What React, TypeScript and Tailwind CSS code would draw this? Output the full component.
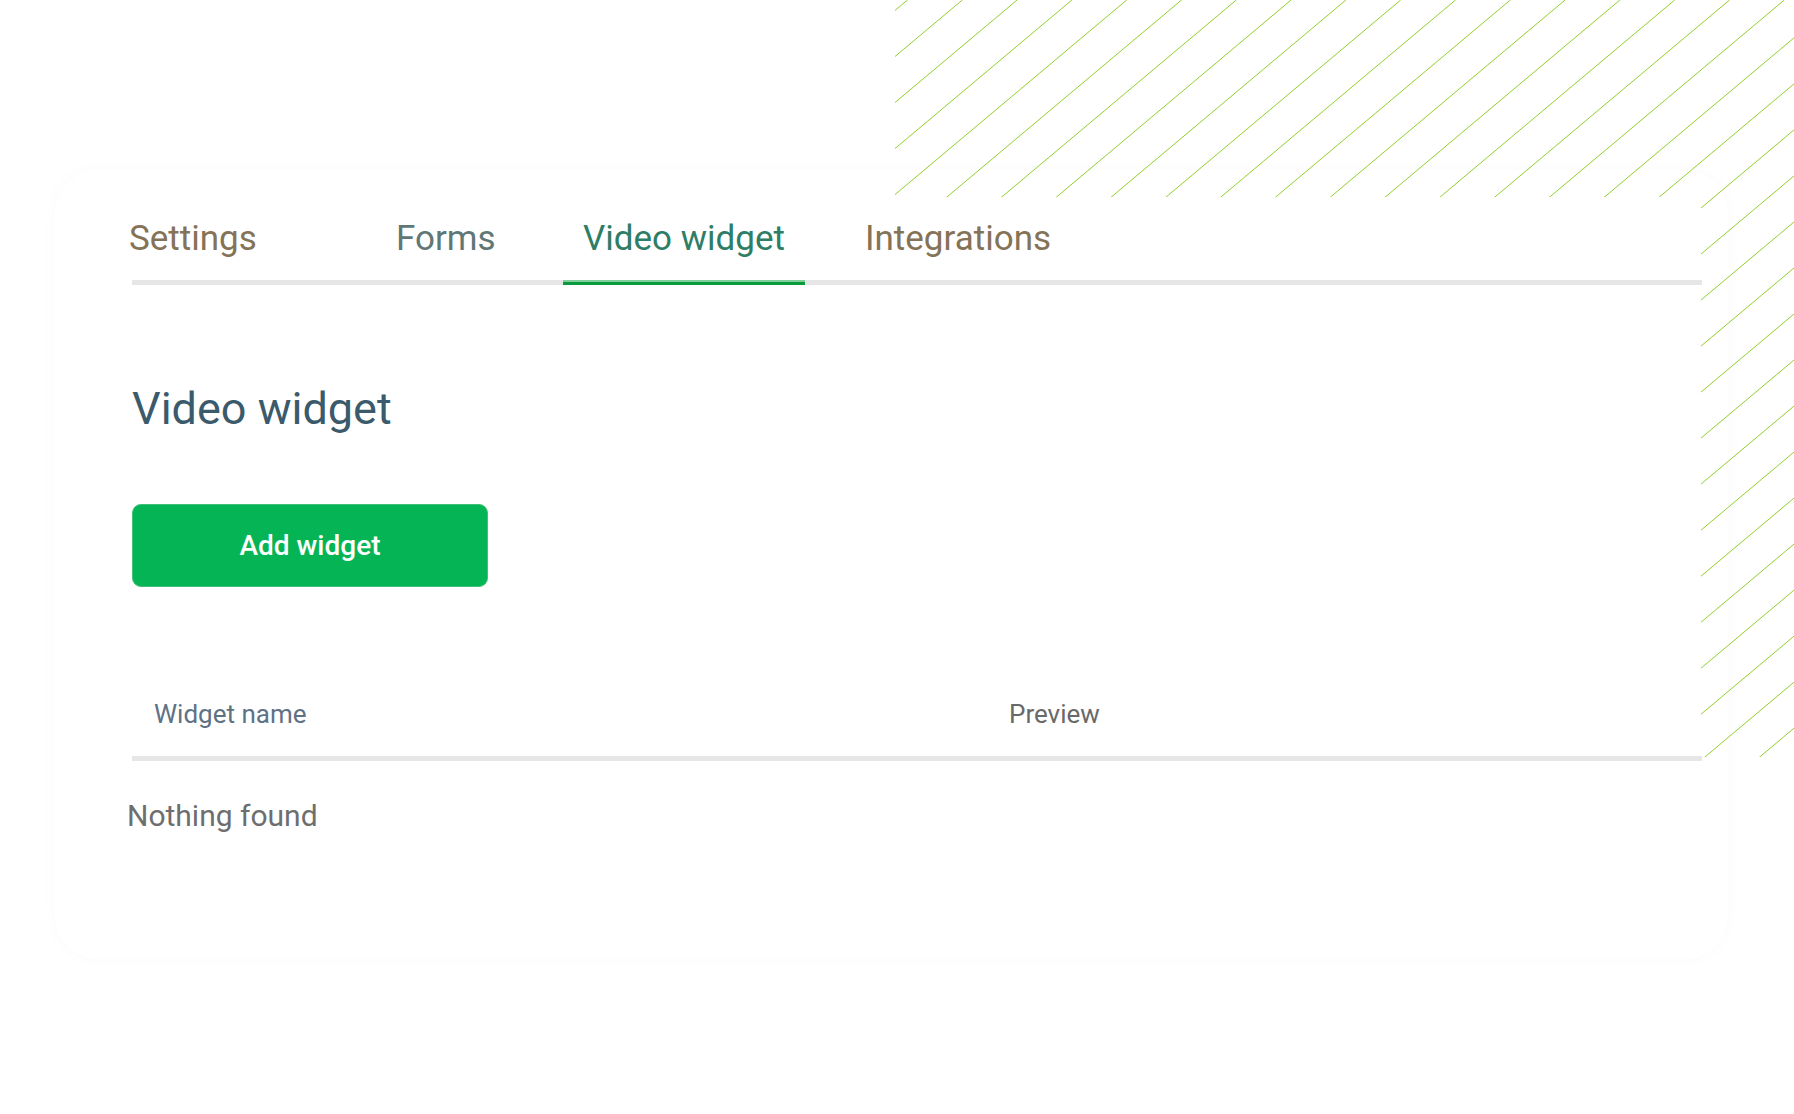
import React from 'react';

const STRIPE_COLOR = '#92cf2c';

// diagonal hatching in the top-right corner, drawn over the card edge
function Stripes() {
  const lines = [];
  for (let k = -20; k < 30; k++) {
    const xk = 947 + k * 54.8;
    lines.push(
      <line key={k} x1={xk - 1092} y1={1114} x2={xk + 234.5} y2={0} stroke={STRIPE_COLOR} strokeWidth={1} />
    );
  }
  return (
    <svg className="pointer-events-none absolute left-0 top-0 z-10" width={1794} height={1114} viewBox="0 0 1794 1114">
      <defs>
        <clipPath id="stripe-clip">
          <polygon points="895,0 1794,0 1794,757 1701,757 1701,197 895,197" />
        </clipPath>
      </defs>
      <g clipPath="url(#stripe-clip)">{lines}</g>
    </svg>
  );
}

export default function App() {
  return (
    <div className="relative h-[1114px] w-[1794px] overflow-hidden bg-white font-['Roboto','Noto_Sans',sans-serif]">
      <Stripes />

      <div className="ml-[55px] mt-[170px] w-[1673px] rounded-[44px] bg-white pb-[125px] pl-[77px] pr-[26px] pt-[49px] shadow-[0_0_18px_rgba(0,0,0,0.025)]">
        {/* tabs */}
        <div className="flex items-end border-b-[5px] border-[#e6e6e6]">
          <div className="-ml-[3px] w-[267px] pb-[21px] text-[35px] leading-[40px] text-[#857357]">Settings</div>
          <div className="w-[167px] pb-[21px] text-[35px] leading-[40px] text-[#5f7775]">Forms</div>
          <div className="-mb-[5px] w-[242px] text-center">
            <div className="pb-[21px] text-[35px] leading-[40px] text-[#2e7d66]">Video widget</div>
            <div className="h-[2px] bg-[#80cf9a]" />
            <div className="h-[3px] bg-[#0a9a3e]" />
          </div>
          <div className="ml-[60px] pb-[21px] text-[35px] leading-[40px] text-[#857357]">Integrations</div>
        </div>

        <h1 className="mt-[98px] text-[45px] font-normal leading-[52px] text-[#3b5a6b]">Video widget</h1>

        <button className="mt-[69px] flex h-[83px] w-[356px] items-center justify-center rounded-[9px] border border-[#3fc177] bg-[#05b555] text-[28px] font-medium text-white">
          Add widget
        </button>

        {/* table */}
        <div className="mt-[112px] flex border-b-[5px] border-[#e6e6e6] pb-[27px] text-[26px] leading-[30px]">
          <div className="w-[877px] pl-[22px] text-[#5e7285]">Widget name</div>
          <div className="text-[#696969]">Preview</div>
        </div>
        <div className="-ml-[5px] mt-[37px] text-[30px] leading-[36px] text-[#6e6e6e]">Nothing found</div>
      </div>
    </div>
  );
}
